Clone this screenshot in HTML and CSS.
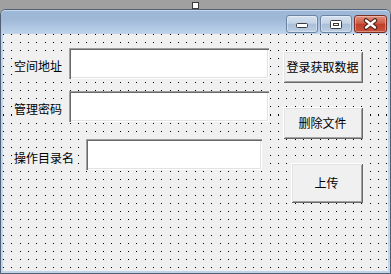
FILE: index.html
```html
<!DOCTYPE html>
<html lang="zh-CN">

<head>
    <meta charset="UTF-8">
    <meta name="viewport" content="width=device-width, initial-scale=1.0">
    <title>Form1 [设计]</title>

    <link rel="stylesheet" href="styles.css">
</head>

<body>
    <div class="top">
        <span class="grip"></span>
    </div>

    <div class="window">
        <div class="titlebar">
            <span class="cap-btn">
                <svg width="30" height="16" viewBox="1 1 30 16">
                    <rect x="10.5" y="8.5" width="11" height="4" rx="1" fill="#fff" stroke="#3b3b3b" />
                </svg>
            </span>
            <span class="cap-btn">
                <svg width="30" height="16" viewBox="1 1 30 16">
                    <rect x="10.5" y="5.5" width="11" height="8" rx="1" fill="#fff" stroke="#3b3b3b" />
                    <rect x="13.5" y="8.5" width="5" height="2" fill="none" stroke="#3b3b3b" />
                </svg>
            </span>
            <span class="cap-btn close">
                <svg width="31" height="16" viewBox="1 1 31 16">
                    <path d="M12 5.5 L21 12.5 M21 5.5 L12 12.5" stroke="#4a1c14" stroke-width="4.6" stroke-linecap="round" />
                    <path d="M12 5.5 L21 12.5 M21 5.5 L12 12.5" stroke="#fff" stroke-width="2.4" stroke-linecap="round" />
                </svg>
            </span>
        </div>

        <div class="client">
            <div class="fields">
                <div class="row">
                    <label class="caption"><span>空间地址</span></label>
                    <input class="textbox" type="text">
                </div>
                <div class="row second">
                    <label class="caption"><span>管理密码</span></label>
                    <input class="textbox" type="text">
                </div>
                <div class="row third">
                    <label class="caption wide"><span>操作目录名</span></label>
                    <input class="textbox short" type="text">
                </div>
            </div>

            <div class="actions">
                <button class="btn">登录获取数据</button>
                <button class="btn">删除文件</button>
                <button class="btn upload">上传</button>
            </div>
        </div>
    </div>
</body>

</html>
```

FILE: styles.css
```css
* {
    box-sizing: border-box;
}

body {
    margin: 0;
    width: 391px;
    height: 274px;
    overflow: hidden;
    background: #a0a0a0;
    font-family: "Noto Sans CJK SC", sans-serif;
    font-size: 12px;
    color: #000;
}

.top {
    height: 9px;
    display: flex;
    justify-content: center;
    padding-top: 2px;
}

.grip {
    width: 7px;
    height: 7px;
    border: 1px solid #3a3a3a;
    background: #fff;
}

.window {
    width: 391px;
    height: 265px;
    border: 1px solid #4f5f74;
    border-radius: 6px 6px 0 0;
    background: #c1d5eb;
    display: flex;
    flex-direction: column;
}

.titlebar {
    height: 24px;
    flex-shrink: 0;
    display: flex;
    justify-content: flex-end;
    gap: 2px;
    padding: 4px 3px 0 0;
    border-radius: 5px 5px 0 0;
    border-top: 1px solid #c9d9ec;
    background: linear-gradient(#9db7d7, #9fb8d7 35%, #b4cbe5 80%, #c1d5eb);
}

.cap-btn {
    width: 32px;
    height: 18px;
    border: 1px solid #6d83a1;
    border-radius: 3px;
    background: linear-gradient(#d6e1ef, #c3d3e6 45%, #a9bed8 52%, #bccfe5);
    box-shadow: inset 0 0 0 1px rgba(255, 255, 255, 0.35);
    display: flex;
}

.cap-btn.close {
    width: 33px;
    border-color: #7b2f22;
    background: linear-gradient(#e1917e, #cf5c45 45%, #bf3f29 52%, #c9533b);
}

.client {
    margin: 0 2px;
    height: 237px;
    flex-shrink: 0;
    display: flex;
    background-color: #f0f0f0;
    background-image:
        repeating-linear-gradient(180deg, transparent 0 1px, #f0f0f0 1px 8.05px),
        repeating-linear-gradient(90deg, #000 0 1px, #f0f0f0 1px 8.33px);
}

.fields {
    width: 266px;
    padding: 14px 0 0 11px;
}

.row {
    display: flex;
    align-items: center;
}

.row.second {
    margin-top: 12px;
}

.row.third {
    margin-top: 17px;
}

.caption {
    width: 55px;
    padding-top: 5px;
}

.caption.wide {
    width: 72px;
    padding-top: 6px;
}

.caption span {
    display: inline-block;
    background: #f0f0f0;
    line-height: 14px;
    padding: 2px 3px 2px 0;
}

.textbox {
    width: 200px;
    height: 31px;
    margin: 0;
    padding: 0;
    border: none;
    outline: none;
    background: #fff;
    font: inherit;
    box-shadow:
        inset 1px 1px #a0a0a0,
        inset 2px 2px #696969,
        inset -1px -1px #fff,
        inset -2px -2px #e3e3e3;
}

.textbox.short {
    width: 176px;
}

.actions {
    display: flex;
    flex-direction: column;
    align-items: flex-start;
    padding-top: 17px;
    margin-left: 14px;
}

.btn {
    width: 80px;
    height: 32px;
    margin: 0;
    padding: 0 1px 1px 0;
    border: none;
    background: #f0f0f0;
    color: #000;
    font: inherit;
    box-shadow:
        inset 1px 1px #fff,
        inset -1px -1px #696969,
        inset 2px 2px #e3e3e3,
        inset -2px -2px #a0a0a0;
}

.btn+.btn {
    margin-top: 24px;
}

.btn.upload {
    width: 72px;
    height: 40px;
    margin-left: 8px;
}
```
